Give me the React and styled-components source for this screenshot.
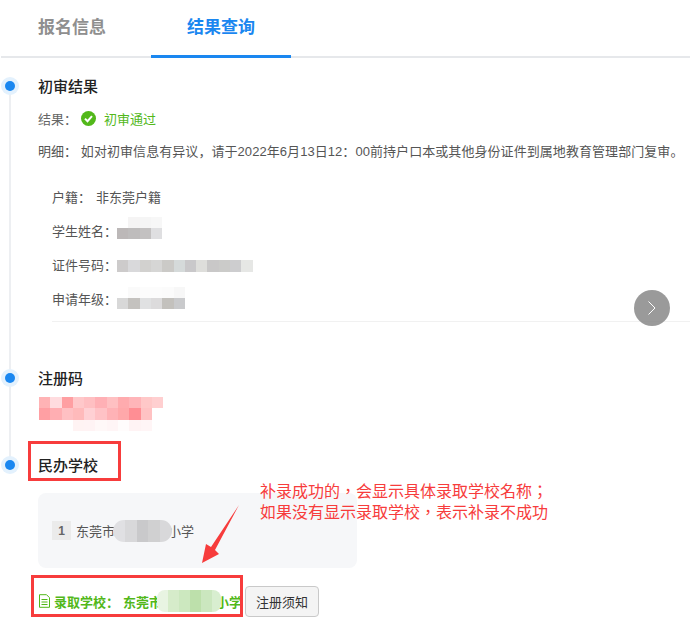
import React from 'react'
import styled, { createGlobalStyle } from 'styled-components'

const GlobalStyle = createGlobalStyle`
  html, body {
    margin: 0;
    padding: 0;
    background: #fff;
  }
  body {
    font-family: "Liberation Sans", "Noto Sans CJK SC", sans-serif;
    color: #555;
  }
`

const nameBlocks = ['#fff', '#f5f4f4', '#f5f5f5', '#f7f7f7', '#bcb8b8', '#bebcbc', '#c3c1c1', '#dfdfe1']
const idBlocks = ['#cdcbcb', '#d9d9db', '#d2d1cf', '#d6d6d5', '#cbcac7', '#d5dada', '#c9c8ca', '#dededb', '#c9c8c8', '#cbcbc9', '#cdcdcf', '#e6e7e5']
const gradeBlocks = ['#fff', '#fafafa', '#fcfcfc', '#fcfcfc', '#fbfbfb', '#f7f7f7', '#d8d8d8', '#c4c2bf', '#e0e1e2', '#dcdbdc', '#c3c1bd', '#c9cacc']
const codeBlocks = [
  '#ffb3b5', '#ffdcdf', '#ff9fa2', '#ffc8ca', '#ffbfc2', '#ffb0b5', '#ffc0c2', '#ffabae', '#ffb5b9', '#ffc8c8', '#ffcfd0',
  '#ff9fa3', '#ffaeb2', '#ffc0c3', '#ffbabb', '#ffd0d4', '#ffc2c6', '#ffb2b6', '#ffa8aa', '#ff8e94', '#ffc2c3', '#fff',
  '#fff', '#fff', '#fff', '#fff3f3', '#fff3f4', '#fff8f8', '#fff5f6', '#fffcfc', '#fff3f4', '#fff5f6', '#fff',
]
const schoolBlocks = ['#e0e0e3', '#d8d8da', '#c9c9cb', '#d0d0d1', '#d8d8da']
const admittedBlocks = ['#e8f4e2', '#d6ecca', '#cce8bf', '#bde0ab', '#cbe7bf', '#d8eed0']

function Mosaic({ blocks, columns, cell = 11.3, height }) {
  return (
    <MosaicGrid $columns={columns} $cell={cell} $height={height || cell}>
      {blocks.map((color, index) => (
        <i key={index} style={{ background: color }} />
      ))}
    </MosaicGrid>
  )
}

export default function App() {
  return (
    <Page>
      <GlobalStyle />
      <Tabs>
        <Tab>报名信息</Tab>
        <Tab $active>结果查询</Tab>
      </Tabs>

      <Step $height={292}>
        <StepTitle>初审结果</StepTitle>
        <ResultRow>
          <ResultLabel>结果：</ResultLabel>
          <svg width="15" height="15" viewBox="0 0 15 15">
            <circle cx="7.500" cy="7.500" r="7.500" fill="#52b81a" />
            <path d="M4 7.600 6.500 10.200 11 5.200" fill="none" stroke="#fff" strokeWidth="2" />
          </svg>
          <PassText>初审通过</PassText>
        </ResultRow>
        <DetailRow>
          明细：&nbsp;如对初审信息有异议，请于2022年6月13日12：00前持户口本或其他身份证件到属地教育管理部门复审。
        </DetailRow>
        <InfoList>
          <InfoRow>
            户籍：<InfoValue>非东莞户籍</InfoValue>
          </InfoRow>
          <InfoRow>
            学生姓名：
            <BlurSlot $up={4}>
              <Mosaic blocks={nameBlocks} columns={4} />
            </BlurSlot>
          </InfoRow>
          <InfoRow>
            证件号码：
            <BlurSlot $down={4}>
              <Mosaic blocks={idBlocks} columns={12} />
            </BlurSlot>
          </InfoRow>
          <InfoRow>
            申请年级：
            <Mosaic blocks={gradeBlocks} columns={6} />
          </InfoRow>
        </InfoList>
        <NextButton>
          <svg width="12" height="16" viewBox="0 0 12 16">
            <path d="M2.500 1.500 9 8l-6.500 6.500" fill="none" stroke="#fff" strokeWidth="1" />
          </svg>
        </NextButton>
      </Step>

      <Step $height={87}>
        <StepTitle>注册码</StepTitle>
        <CodeWrap>
          <Mosaic blocks={codeBlocks} columns={11} />
        </CodeWrap>
      </Step>

      <Step $last>
        <StepTitle>民办学校</StepTitle>
        <SchoolCard>
          <RankBadge>1</RankBadge>
          东莞市
          <SchoolBlur>
            <Mosaic blocks={schoolBlocks} columns={5} cell={11.8} height={22} />
          </SchoolBlur>
          小学
        </SchoolCard>
        <AdmitRow>
          <svg width="13" height="14" viewBox="0 0 13 14">
            <path d="M1.500.7h7l3 3v9.600h-10zM3.500 5.500h6M3.500 8h6M3.500 10.500h6" fill="none" stroke="#52b81a" />
          </svg>
          <AdmitLabel>录取学校：</AdmitLabel>
          <AdmitName>
            东莞市
            <AdmitBlur>
              <Mosaic blocks={admittedBlocks} columns={6} cell={11} height={22} />
            </AdmitBlur>
            小学
          </AdmitName>
          <NoticeButton>注册须知</NoticeButton>
        </AdmitRow>
      </Step>

      <TitleMark />
      <AdmitMark />
      <Annotation>
        补录成功的，会显示具体录取学校名称；
        <br />
        如果没有显示录取学校，表示补录不成功
      </Annotation>
      <Arrow width="40" height="60" viewBox="0 0 40 60">
        <path d="M39 1 15 46 19 50 2 59 6 40 11 43Z" fill="#f73c3c" />
      </Arrow>
    </Page>
  )
}

const Page = styled.div`
  position: relative;
  width: 690px;
  height: 622px;
  overflow: hidden;
  background: #fff;
`

const Tabs = styled.div`
  display: flex;
  height: 56px;
  margin-left: 1px;
  border-bottom: 2px solid #e6e8eb;
`

const Tab = styled.div`
  display: flex;
  justify-content: ${(p) => (p.$active ? 'center' : 'flex-start')};
  width: ${(p) => (p.$active ? '140px' : '150px')};
  box-sizing: border-box;
  height: 58px;
  padding-top: 17px;
  padding-left: ${(p) => (p.$active ? '0' : '37px')};
  border-bottom: 3px solid ${(p) => (p.$active ? '#1a87f0' : 'transparent')};
  font-size: 17px;
  font-weight: 700;
  line-height: 22px;
  color: ${(p) => (p.$active ? '#1a87f0' : '#8f8f8f')};
`

const Step = styled.section`
  position: relative;
  height: ${(p) => (p.$height ? `${p.$height}px` : 'auto')};
  padding-left: 38px;

  &::before {
    content: '';
    position: absolute;
    left: 9px;
    top: 28px;
    bottom: ${(p) => (p.$last ? 'auto' : '-28px')};
    width: 2px;
    background: #edeff2;
  }

  &::after {
    content: '';
    position: absolute;
    left: 5px;
    top: 23px;
    width: 10px;
    height: 10px;
    border-radius: 50%;
    background: #1a87f0;
    box-shadow: 0 0 0 4px #e3f1fd;
  }
`

const StepTitle = styled.h3`
  margin: 0;
  padding-top: 18px;
  font-size: 15px;
  font-weight: 500;
  line-height: 22px;
  color: #222;
`

const ResultRow = styled.div`
  display: flex;
  align-items: center;
  margin-top: 10px;
  height: 20px;
  font-size: 13px;
  color: #666;
`

const ResultLabel = styled.span`
  width: 43px;
  white-space: nowrap;
`

const PassText = styled.span`
  margin-left: 8px;
  color: #52b81a;
`

const DetailRow = styled.div`
  margin-top: 14px;
  font-size: 13px;
  line-height: 20px;
  letter-spacing: 0.06px;
  white-space: nowrap;
  color: #555;
`

const InfoList = styled.div`
  margin: 17px 0 0 14px;
  padding-bottom: 6px;
  border-bottom: 1px solid #f1f1f1;
`

const InfoRow = styled.div`
  display: flex;
  align-items: center;
  height: 34px;
  font-size: 13px;
  color: #555;
`

const InfoValue = styled.span`
  margin-left: 5px;
`

const BlurSlot = styled.div`
  margin-top: ${(p) => p.$down || 0}px;
  margin-bottom: ${(p) => p.$up || 0}px;
`

const MosaicGrid = styled.div`
  display: grid;
  grid-template-columns: repeat(${(p) => p.$columns}, ${(p) => p.$cell}px);
  grid-auto-rows: ${(p) => p.$height}px;
`

const NextButton = styled.div`
  position: absolute;
  left: 634px;
  top: 232px;
  display: flex;
  align-items: center;
  justify-content: center;
  width: 36px;
  height: 36px;
  border-radius: 50%;
  background: rgba(136, 136, 136, 0.85);
`

const CodeWrap = styled.div`
  margin-top: 7px;
  margin-left: 1px;
`

const SchoolCard = styled.div`
  display: flex;
  align-items: center;
  box-sizing: border-box;
  width: 319px;
  height: 75px;
  margin-top: 16px;
  padding-left: 14px;
  border-radius: 8px;
  background: #f6f7f9;
  font-size: 13px;
  color: #555;
`

const RankBadge = styled.span`
  display: flex;
  align-items: center;
  justify-content: center;
  width: 19px;
  height: 19px;
  margin-right: 5px;
  background: #ebebeb;
  font-size: 12px;
  font-weight: 700;
  color: #666;
`

const SchoolBlur = styled.div`
  position: relative;
  width: 59px;
  height: 22px;
  margin: 0 -4px 0 -2px;
  overflow: hidden;
  border-radius: 11px;
`

const AdmitRow = styled.div`
  display: flex;
  align-items: center;
  margin-top: 18px;
  height: 30px;
`

const AdmitLabel = styled.span`
  margin-left: 3px;
  font-size: 13px;
  font-weight: 700;
  color: #52b81a;
`

const AdmitName = styled.span`
  display: flex;
  align-items: center;
  margin-left: 4px;
  width: 119px;
  font-size: 13px;
  font-weight: 700;
  white-space: nowrap;
  color: #52b81a;
`

const AdmitBlur = styled.div`
  position: relative;
  width: 64px;
  height: 22px;
  margin: 0 -5px;
  overflow: hidden;
  border-radius: 8px;
`

const NoticeButton = styled.button`
  width: 74px;
  height: 31px;
  margin-left: 3px;
  padding: 0;
  border: 1px solid #c9c9c9;
  border-radius: 4px;
  background: #f4f4f4;
  font-family: inherit;
  font-size: 13px;
  color: #333;
`

const TitleMark = styled.div`
  position: absolute;
  left: 28px;
  top: 441px;
  width: 93px;
  height: 40px;
  border: 3px solid #f73c3c;
  box-sizing: border-box;
`

const AdmitMark = styled.div`
  position: absolute;
  left: 31px;
  top: 575px;
  width: 212px;
  height: 42px;
  border: 3px solid #f73c3c;
  box-sizing: border-box;
`

const Annotation = styled.div`
  position: absolute;
  left: 260px;
  top: 481px;
  font-family: "Liberation Sans", "Noto Sans CJK TC", sans-serif;
  font-size: 16px;
  line-height: 21px;
  white-space: nowrap;
  color: #f73c3c;
`

const Arrow = styled.svg`
  position: absolute;
  left: 200px;
  top: 504px;
`
